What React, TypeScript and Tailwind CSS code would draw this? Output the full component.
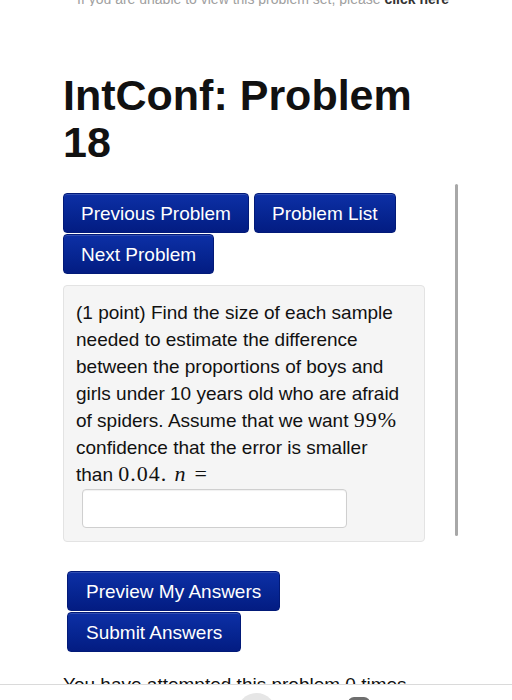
import React from 'react';

const btn =
  'h-[40px] flex items-center rounded-[4px] border border-[#021a78] bg-gradient-to-b from-[#0d30a6] to-[#031c82] text-white text-[19px] leading-none shadow-[inset_0_1px_0_rgba(255,255,255,0.15)]';

function MathText({ children, italic, className = '' }: { children: React.ReactNode; italic?: boolean; className?: string }) {
  return (
    <span
      className={`text-[22px] leading-none tracking-[1px] ${italic ? 'italic' : ''} ${className}`}
      style={{ fontFamily: '"Liberation Serif", "DejaVu Serif", serif' }}
    >
      {children}
    </span>
  );
}

export default function App() {
  return (
    <div
      className="relative h-[700px] overflow-hidden bg-white text-[#111]"
      style={{ fontFamily: '"Liberation Sans", Arial, sans-serif' }}
    >
      {/* top notice, mostly scrolled out of view */}
      <div className="h-[6px] overflow-hidden">
        <p className="-mt-[9px] pl-[77px] text-[14px] leading-[16px] text-[#a0a0a0] whitespace-nowrap">
          If you are unable to view this problem set, please <span className="font-bold text-[#333]">click here</span>
        </p>
      </div>

      <div className="ml-[63px] w-[362px] pt-[66px]">
        <h1 className="text-[43px] leading-[47px] font-bold text-[#111]">IntConf: Problem 18</h1>

        <div className="mt-[27px] flex flex-wrap gap-x-[5px] gap-y-[1px]">
          <button className={`${btn} px-[17px]`}>Previous Problem</button>
          <button className={`${btn} px-[17px]`}>Problem List</button>
          <button className={`${btn} px-[17px]`}>Next Problem</button>
        </div>

        {/* problem body */}
        <div className="mt-[11px] rounded-[4px] border border-[#e3e3e3] bg-[#f5f5f5] px-[12px] pt-[13px] pb-[13px]">
          <p className="text-[19px] leading-[27px] text-[#111]">
            (1 point) Find the size of each sample
            <br />
            needed to estimate the difference
            <br />
            between the proportions of boys and
            <br />
            girls under 10 years old who are afraid
            <br />
            of spiders. Assume that we want <MathText>99%</MathText>
            <br />
            confidence that the error is smaller
            <br />
            than <MathText>0.04.</MathText> <MathText italic className="ml-[2px]">n</MathText>
            <MathText className="ml-[8px]">=</MathText>
          </p>
          <input
            type="text"
            className="mt-[1px] ml-[6px] block h-[39px] w-[265px] rounded-[4px] border border-[#cfcfcf] bg-white shadow-[inset_0_1px_1px_rgba(0,0,0,0.06)]"
          />
        </div>

        <div className="mt-[29px] ml-[4px] flex flex-col items-start gap-y-[1px]">
          <button className={`${btn} px-[18px]`}>Preview My Answers</button>
          <button className={`${btn} px-[18px]`}>Submit Answers</button>
        </div>

        <p className="mt-[19px] text-[19px] leading-[27px] text-[#111]">You have attempted this problem 0 times.</p>
      </div>

      {/* scroll indicator */}
      <div className="absolute left-[455px] top-[184px] h-[352px] w-[3px] rounded-full bg-[#a8a8a8]" />

      {/* browser toolbar peeking in at the bottom */}
      <div className="absolute bottom-0 left-0 right-0 h-[16px] border-t border-[#dadada] bg-white">
        <div className="absolute left-[237px] top-[8px] h-[40px] w-[39px] rounded-full bg-[#e6e6e6]" />
        <div className="absolute left-[348px] top-[12px] h-[20px] w-[22px] rounded-t-[6px] bg-[#6e6e6e]" />
      </div>
    </div>
  );
}
